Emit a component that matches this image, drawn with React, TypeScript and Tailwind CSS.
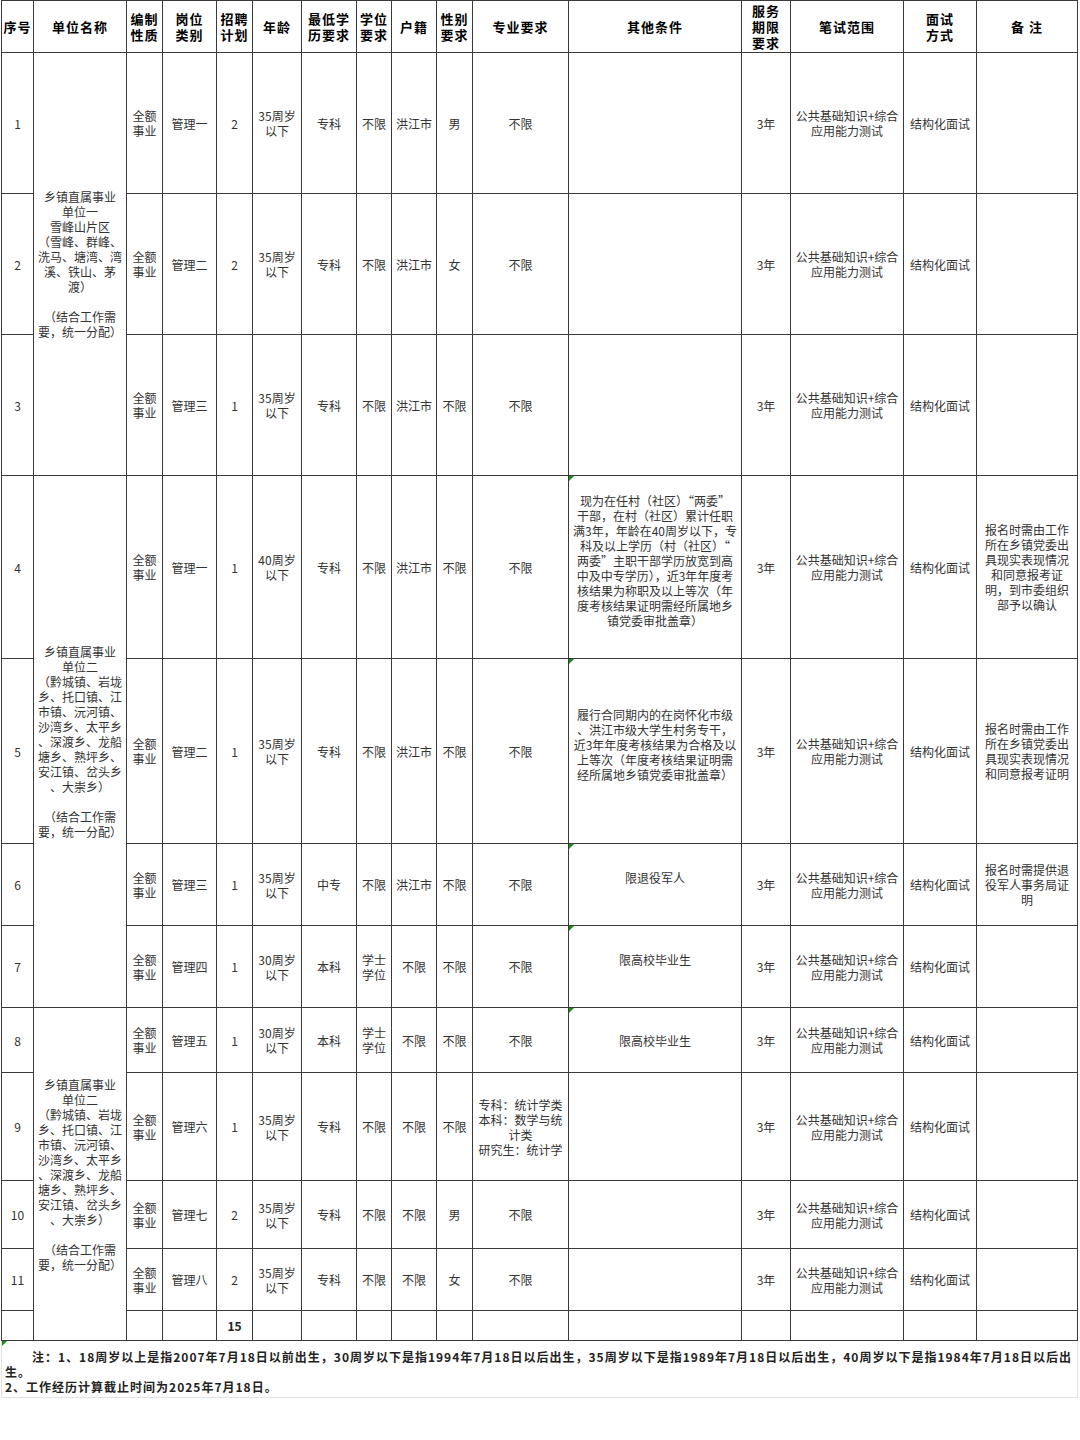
import React from 'react';

const W = '公共基础知识+综合\n应用能力测试';
const C4 =
  '现为在任村（社区）“两委”\n干部，在村（社区）累计任职\n满3年，年龄在40周岁以下，专\n科及以上学历（村（社区）“\n两委”主职干部学历放宽到高\n中及中专学历），近3年年度考\n核结果为称职及以上等次（年\n度考核结果证明需经所属地乡\n镇党委审批盖章）';
const C5 =
  '履行合同期内的在岗怀化市级\n、洪江市级大学生村务专干，\n近3年年度考核结果为合格及以\n上等次（年度考核结果证明需\n经所属地乡镇党委审批盖章）';
const R4 = '报名时需由工作\n所在乡镇党委出\n具现实表现情况\n和同意报考证\n明，到市委组织\n部予以确认';
const R5 = '报名时需由工作\n所在乡镇党委出\n具现实表现情况\n和同意报考证明';
const R6 = '报名时需提供退\n役军人事务局证\n明';
const M9 = '专科：统计学类\n本科：数学与统\n计类\n研究生：统计学';

const U1 = '乡镇直属事业\n单位一\n雪峰山片区\n（雪峰、群峰、\n洗马、塘湾、湾\n溪、铁山、茅\n渡）\n\n（结合工作需\n要，统一分配）';
const U2 =
  '乡镇直属事业\n单位二\n（黔城镇、岩垅\n乡、托口镇、江\n市镇、沅河镇、\n沙湾乡、太平乡\n、深渡乡、龙船\n塘乡、熟坪乡、\n安江镇、岔头乡\n、大崇乡）\n\n（结合工作需\n要，统一分配）';

type Row = { c: string[]; tri?: boolean; pad?: boolean; unit?: { text: string; span: string } };

const QE = '全额\n事业';
const rows: Row[] = [
  { c: ['1', QE, '管理一', '2', '35周岁\n以下', '专科', '不限', '洪江市', '男', '不限', '', '3年', W, '结构化面试', ''], unit: { text: U1, span: 'row-span-3' } },
  { c: ['2', QE, '管理二', '2', '35周岁\n以下', '专科', '不限', '洪江市', '女', '不限', '', '3年', W, '结构化面试', ''] },
  { c: ['3', QE, '管理三', '1', '35周岁\n以下', '专科', '不限', '洪江市', '不限', '不限', '', '3年', W, '结构化面试', ''] },
  { c: ['4', QE, '管理一', '1', '40周岁\n以下', '专科', '不限', '洪江市', '不限', '不限', C4, '3年', W, '结构化面试', R4], tri: true, pad: true, unit: { text: U2, span: 'row-span-4' } },
  { c: ['5', QE, '管理二', '1', '35周岁\n以下', '专科', '不限', '洪江市', '不限', '不限', C5, '3年', W, '结构化面试', R5], tri: true, pad: true },
  { c: ['6', QE, '管理三', '1', '35周岁\n以下', '中专', '不限', '洪江市', '不限', '不限', '限退役军人', '3年', W, '结构化面试', R6], tri: true, pad: true },
  { c: ['7', QE, '管理四', '1', '30周岁\n以下', '本科', '学士\n学位', '不限', '不限', '不限', '限高校毕业生', '3年', W, '结构化面试', ''], tri: true, pad: true },
  { c: ['8', QE, '管理五', '1', '30周岁\n以下', '本科', '学士\n学位', '不限', '不限', '不限', '限高校毕业生', '3年', W, '结构化面试', ''], tri: true, unit: { text: U2, span: 'row-span-5' } },
  { c: ['9', QE, '管理六', '1', '35周岁\n以下', '专科', '不限', '不限', '不限', M9, '', '3年', W, '结构化面试', ''] },
  { c: ['10', QE, '管理七', '2', '35周岁\n以下', '专科', '不限', '不限', '男', '不限', '', '3年', W, '结构化面试', ''] },
  { c: ['11', QE, '管理八', '2', '35周岁\n以下', '专科', '不限', '不限', '女', '不限', '', '3年', W, '结构化面试', ''] },
];

const headers = [
  '序号',
  '单位名称',
  '编制\n性质',
  '岗位\n类别',
  '招聘\n计划',
  '年龄',
  '最低学\n历要求',
  '学位\n要求',
  '户籍',
  '性别\n要求',
  '专业要求',
  '其他条件',
  '服务\n期限\n要求',
  '笔试范围',
  '面试\n方式',
  '备 注',
];

const cellBase = 'relative flex items-center justify-center text-center border-r border-b border-[#3a3a3a] whitespace-pre';

function Tri() {
  return <span className="absolute left-0 top-0 h-0 w-0 border-t-[5px] border-r-[5px] border-t-[#1d8a1d] border-r-transparent" />;
}

export default function App() {
  const cells: React.ReactNode[] = [];
  headers.forEach((h, i) => {
    cells.push(
      <div key={'h' + i} className={`${cellBase} text-[13px] leading-[16px] tracking-[1px] font-bold text-black`}>
        {h}
      </div>
    );
  });
  rows.forEach((r, ri) => {
    r.c.forEach((v, ci) => {
      if (ci === 1 && r.unit) {
        cells.push(
          <div key={`u${ri}`} className={`${cellBase} ${r.unit.span} text-[12px] leading-[15px] text-[#333]`}>
            {r.unit.text}
          </div>
        );
      }
      const isOther = ci === 10;
      cells.push(
        <div
          key={`c${ri}-${ci}`}
          className={`${cellBase} text-[12px] leading-[15px] text-[#333] ${isOther && r.pad ? 'pb-[14px]' : ''}`}
        >
          {isOther && r.tri ? <Tri /> : null}
          {v}
        </div>
      );
    });
  });
  for (let i = 0; i < 15; i++) {
    cells.push(
      <div key={`t${i}`} className={`${cellBase} text-[12px] leading-[15px] text-[#222] font-bold`}>
        {i === 3 ? '15' : ''}
      </div>
    );
  }

  return (
    <div className="min-h-[1440px] w-[1080px] bg-white font-['Noto_Sans_CJK_SC',sans-serif]">
      <div className="ml-px grid w-[1077px] grid-cols-[32px_93px_36px_54px_36px_49px_55px_35px_45px_36px_96px_173px_49px_113px_73px_101px] grid-rows-[52px_141px_141px_141px_183px_185px_82px_82px_65px_108px_68px_62px_30px] border-l border-t border-[#3a3a3a]">
        {cells}
      </div>
      <div className="relative ml-px h-[57px] w-[1077px] border border-t-0 border-[#e2e2e2] pl-[3px] pt-[8px] text-[12px] font-bold leading-[15px] tracking-[1px] text-[#222]">
        <Tri />
        <div className="indent-[27px] whitespace-nowrap">
          注：1、18周岁以上是指2007年7月18日以前出生，30周岁以下是指1994年7月18日以后出生，35周岁以下是指1989年7月18日以后出生，40周岁以下是指1984年7月18日以后出
          <br />
          生。
        </div>
        <div className="whitespace-nowrap">2、工作经历计算截止时间为2025年7月18日。</div>
      </div>
    </div>
  );
}
